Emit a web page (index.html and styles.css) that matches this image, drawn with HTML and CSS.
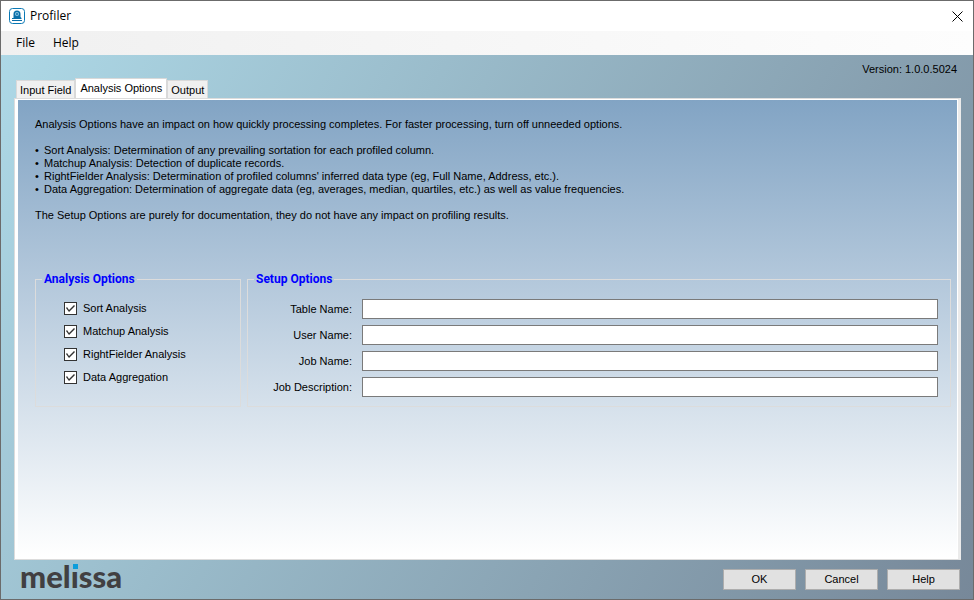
FILE: index.html
```
<!DOCTYPE html>
<html lang="en">
<head>
  <meta charset="UTF-8">
  <meta name="viewport" content="width=device-width, initial-scale=1.0">
  <title>Profiler</title>
  <link rel="stylesheet" href="styles.css">
</head>
<body>
  <div class="window">
    <header class="title-bar">
      <svg class="app-icon" viewBox="0 0 16 16" fill="none">
        <rect x="0.5" y="0.5" width="15" height="15" rx="3" fill="#fff" stroke="#0a78b4"/>
        <path d="M4.500 9V6a3.500 3.500 0 0 1 7 0V9l1 1v1H6l-1.500-1z" fill="#0a6ea8"/>
        <circle cx="8" cy="6" r="2" fill="#8cc4e2"/>
        <circle cx="8" cy="6" r="1" fill="#0a6ea8"/>
        <path d="M3 12.500h10M3 10.500h3" stroke="#0a6ea8"/>
      </svg>
      <h1>Profiler</h1>
      <button class="close-btn" type="button" aria-label="Close">
        <svg viewBox="0 0 11 11" fill="none" stroke="#000"><path d="M0.500 0.500l10 10M10.500 0.500l-10 10"/></svg>
      </button>
    </header>

    <nav class="menu-bar">
      <button type="button">File</button>
      <button type="button">Help</button>
    </nav>

    <main>
      <div class="version">Version: 1.0.0.5024</div>

      <div class="tabs" role="tablist">
        <button class="tab" type="button" role="tab">Input Field</button>
        <button class="tab active" type="button" role="tab" aria-selected="true">Analysis Options</button>
        <button class="tab" type="button" role="tab">Output</button>
      </div>

      <div class="tab-frame">
        <div class="tab-page" role="tabpanel">
          <div class="intro">
            <p>Analysis Options have an impact on how quickly processing completes. For faster processing, turn off unneeded options.</p>
            <ul>
              <li>Sort Analysis: Determination of any prevailing sortation for each profiled column.</li>
              <li>Matchup Analysis: Detection of duplicate records.</li>
              <li>RightFielder Analysis: Determination of profiled columns' inferred data type (eg, Full Name, Address, etc.).</li>
              <li>Data Aggregation: Determination of aggregate data (eg, averages, median, quartiles, etc.) as well as value frequencies.</li>
            </ul>
            <p>The Setup Options are purely for documentation, they do not have any impact on profiling results.</p>
          </div>

          <div class="groups">
            <fieldset class="analysis">
              <legend>Analysis Options</legend>
              <div class="checks">
                <label><input type="checkbox" checked>Sort Analysis</label>
                <label><input type="checkbox" checked>Matchup Analysis</label>
                <label><input type="checkbox" checked>RightFielder Analysis</label>
                <label><input type="checkbox" checked>Data Aggregation</label>
              </div>
            </fieldset>

            <fieldset class="setup">
              <legend>Setup Options</legend>
              <div class="fields">
                <label for="tableName">Table Name:</label>
                <input type="text" id="tableName">
                <label for="userName">User Name:</label>
                <input type="text" id="userName">
                <label for="jobName">Job Name:</label>
                <input type="text" id="jobName">
                <label for="jobDescription">Job Description:</label>
                <input type="text" id="jobDescription">
              </div>
            </fieldset>
          </div>
        </div>
      </div>

      <footer>
        <div class="logo">mel<span class="logo-i">ı</span>ssa</div>
        <div class="buttons">
          <button class="btn" type="button">OK</button>
          <button class="btn" type="button">Cancel</button>
          <button class="btn" type="button">Help</button>
        </div>
      </footer>
    </main>
  </div>
</body>
</html>
```
FILE: styles.css
```
* {
  margin: 0;
  padding: 0;
  box-sizing: border-box;
}

body {
  font-family: "Liberation Sans", Arial, sans-serif;
  font-size: 11px;
  line-height: 13px;
  color: #000;
}

button,
input {
  font: inherit;
  color: inherit;
}

.window {
  display: flex;
  flex-direction: column;
  min-height: 100vh;
  border: 1px solid #6b6b6b;
}

.title-bar {
  display: flex;
  align-items: center;
  gap: 5px;
  height: 30px;
  padding: 0 10px 0 8px;
  background: #fff;
}

.app-icon {
  width: 16px;
  height: 16px;
}

.title-bar h1 {
  font: 12px/16px "Open Sans", "Noto Sans", sans-serif;
}

.close-btn {
  display: flex;
  margin-left: auto;
  border: 0;
  background: none;
}

.close-btn svg {
  width: 11px;
  height: 11px;
}

.menu-bar {
  display: flex;
  gap: 18px;
  height: 24px;
  padding: 0 15px;
  background: linear-gradient(90deg, #f0f0f0, #fdfdfd);
}

.menu-bar button {
  border: 0;
  background: none;
  font: 12px/16px "Open Sans", "Noto Sans", sans-serif;
}

main {
  display: flex;
  flex: 1;
  flex-direction: column;
  padding: 8px 12px 0 13px;
  background: linear-gradient(120deg, #add8e6, #778899);
}

.version {
  padding-right: 4px;
  text-align: right;
}

/* Tabs */
.tabs {
  display: flex;
  align-items: flex-end;
  height: 22px;
  padding: 0 2px;
}

.tab {
  height: 18px;
  padding: 1px 3px 0;
  border: 1px solid #d9d9d9;
  border-bottom: 0;
  background: #f0f0f0;
}

.tab.active {
  height: 20px;
  padding: 0 4px 1px;
  background: #fff;
}

.tab-frame {
  display: flex;
  flex: 1;
  padding: 1px 1px 1px 3px;
  border: 1px solid #dcdcdc;
  border-right: 3px solid #ebebeb;
  background: #fff;
}

.tab-page {
  flex: 1;
  padding: 18px 6px 18px 17px;
  background: linear-gradient(#82a4c4, #fff);
}

.intro ul {
  margin: 13px 0;
  list-style: none;
}

.intro li::before {
  content: "•";
  display: inline-block;
  width: 9px;
}

/* Option groups */
.groups {
  display: flex;
  gap: 6px;
  margin-top: 50px;
}

fieldset {
  min-width: 0;
  padding: 0 6px;
  border: 1px solid #dcdcdc;
}

legend {
  padding: 0 2px;
  font: bold 12px/14px Roboto, sans-serif;
  color: #00f;
}

.analysis {
  flex: 0 0 206px;
}

.checks {
  padding: 11px 22px 16px;
}

.checks label {
  display: flex;
  align-items: center;
  gap: 6px;
  height: 23px;
}

.checks input {
  position: relative;
  width: 13px;
  height: 13px;
  border: 1px solid #333;
  background: #fff;
  appearance: none;
}

.checks input:checked::after {
  content: "";
  position: absolute;
  inset: 0;
  background: #333;
  clip-path: polygon(1px 5px, 2px 4px, 4px 7px, 9px 2px, 10px 3px, 4px 9px);
}

.setup {
  flex: 1;
}

.fields {
  display: grid;
  grid-template-columns: 84px 1fr;
  gap: 6px 10px;
  align-items: center;
  padding: 13px 6px 9px 14px;
}

.fields label {
  text-align: right;
  white-space: nowrap;
}

.fields input {
  width: 100%;
  height: 20px;
  padding: 0 4px;
  border: 1px solid #7a7a7a;
  background: #fff;
}

/* Bottom bar */
footer {
  display: flex;
  justify-content: space-between;
  height: 39px;
  padding: 0 1px 0 6px;
}

.logo {
  font: 900 31px/32px Lato, sans-serif;
  color: #414042;
}

.logo-i {
  position: relative;
}

.logo-i::before {
  content: "";
  position: absolute;
  top: 7px;
  left: 2px;
  width: 5px;
  height: 5px;
  background: #0c9ddb;
}

.buttons {
  display: flex;
  gap: 9px;
  padding-top: 9px;
}

.btn {
  width: 73px;
  height: 21px;
  border: 1px solid #adadad;
  background: #e1e1e1;
}
```
